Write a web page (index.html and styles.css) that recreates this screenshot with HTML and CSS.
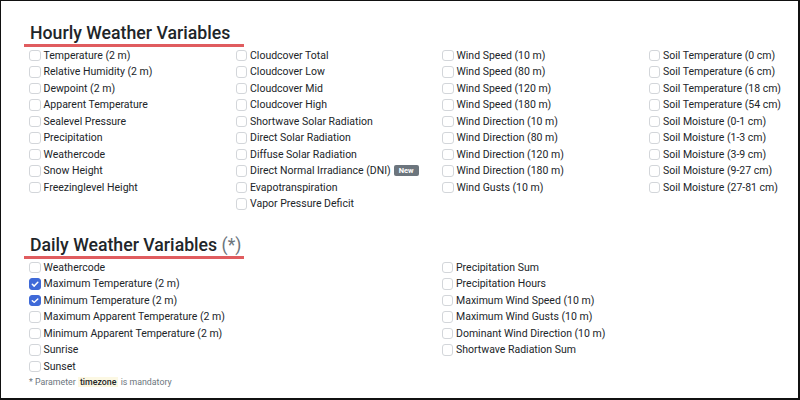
FILE: index.html
```html
<!DOCTYPE html>
<html lang="en">
<head>
  <meta charset="UTF-8">
  <title>Weather Variables</title>
  <link rel="stylesheet" href="styles.css">
</head>
<body>
  <div class="frame">

    <section class="group">
      <h2 class="title">Hourly Weather Variables</h2>
      <div class="grid four">
        <div class="col">
          <label class="check"><span class="box"></span>Temperature (2 m)</label>
          <label class="check"><span class="box"></span>Relative Humidity (2 m)</label>
          <label class="check"><span class="box"></span>Dewpoint (2 m)</label>
          <label class="check"><span class="box"></span>Apparent Temperature</label>
          <label class="check"><span class="box"></span>Sealevel Pressure</label>
          <label class="check"><span class="box"></span>Precipitation</label>
          <label class="check"><span class="box"></span>Weathercode</label>
          <label class="check"><span class="box"></span>Snow Height</label>
          <label class="check"><span class="box"></span>Freezinglevel Height</label>
        </div>
        <div class="col">
          <label class="check"><span class="box"></span>Cloudcover Total</label>
          <label class="check"><span class="box"></span>Cloudcover Low</label>
          <label class="check"><span class="box"></span>Cloudcover Mid</label>
          <label class="check"><span class="box"></span>Cloudcover High</label>
          <label class="check"><span class="box"></span>Shortwave Solar Radiation</label>
          <label class="check"><span class="box"></span>Direct Solar Radiation</label>
          <label class="check"><span class="box"></span>Diffuse Solar Radiation</label>
          <label class="check"><span class="box"></span>Direct Normal Irradiance (DNI)<span class="badge">New</span></label>
          <label class="check"><span class="box"></span>Evapotranspiration</label>
          <label class="check"><span class="box"></span>Vapor Pressure Deficit</label>
        </div>
        <div class="col">
          <label class="check"><span class="box"></span>Wind Speed (10 m)</label>
          <label class="check"><span class="box"></span>Wind Speed (80 m)</label>
          <label class="check"><span class="box"></span>Wind Speed (120 m)</label>
          <label class="check"><span class="box"></span>Wind Speed (180 m)</label>
          <label class="check"><span class="box"></span>Wind Direction (10 m)</label>
          <label class="check"><span class="box"></span>Wind Direction (80 m)</label>
          <label class="check"><span class="box"></span>Wind Direction (120 m)</label>
          <label class="check"><span class="box"></span>Wind Direction (180 m)</label>
          <label class="check"><span class="box"></span>Wind Gusts (10 m)</label>
        </div>
        <div class="col">
          <label class="check"><span class="box"></span>Soil Temperature (0 cm)</label>
          <label class="check"><span class="box"></span>Soil Temperature (6 cm)</label>
          <label class="check"><span class="box"></span>Soil Temperature (18 cm)</label>
          <label class="check"><span class="box"></span>Soil Temperature (54 cm)</label>
          <label class="check"><span class="box"></span>Soil Moisture (0-1 cm)</label>
          <label class="check"><span class="box"></span>Soil Moisture (1-3 cm)</label>
          <label class="check"><span class="box"></span>Soil Moisture (3-9 cm)</label>
          <label class="check"><span class="box"></span>Soil Moisture (9-27 cm)</label>
          <label class="check"><span class="box"></span>Soil Moisture (27-81 cm)</label>
        </div>
      </div>
    </section>

    <section class="group daily">
      <h2 class="title">Daily Weather Variables <span class="muted">(*)</span></h2>
      <div class="grid two">
        <div class="col">
          <label class="check"><span class="box"></span>Weathercode</label>
          <label class="check"><span class="box on"></span>Maximum Temperature (2 m)</label>
          <label class="check"><span class="box on"></span>Minimum Temperature (2 m)</label>
          <label class="check"><span class="box"></span>Maximum Apparent Temperature (2 m)</label>
          <label class="check"><span class="box"></span>Minimum Apparent Temperature (2 m)</label>
          <label class="check"><span class="box"></span>Sunrise</label>
          <label class="check"><span class="box"></span>Sunset</label>
          <p class="note">* Parameter <mark>timezone</mark> is mandatory</p>
        </div>
        <div class="col">
          <label class="check"><span class="box"></span>Precipitation Sum</label>
          <label class="check"><span class="box"></span>Precipitation Hours</label>
          <label class="check"><span class="box"></span>Maximum Wind Speed (10 m)</label>
          <label class="check"><span class="box"></span>Maximum Wind Gusts (10 m)</label>
          <label class="check"><span class="box"></span>Dominant Wind Direction (10 m)</label>
          <label class="check"><span class="box"></span>Shortwave Radiation Sum</label>
        </div>
      </div>
    </section>

  </div>
</body>
</html>
```

FILE: styles.css
```css
html, body {
  margin: 0;
  padding: 0;
}
body {
  font-family: 'Roboto', 'Liberation Sans', sans-serif;
  color: #212529;
  background: #fff;
}
.frame {
  box-sizing: border-box;
  width: 800px;
  height: 400px;
  border: solid #111;
  border-width: 1px 2px 2px 1px;
  padding: 21px 0 0 23px;
  overflow: hidden;
}
.title {
  box-sizing: border-box;
  width: 220px;
  margin: 0;
  padding-left: 6px;
  font-size: 17.7px;
  font-weight: 500;
  line-height: 22px;
  white-space: nowrap;
  border-bottom: 3px solid #e05c5f;
}
.title .muted {
  font-weight: 400;
  color: #6c757d;
}
.grid {
  display: grid;
  margin-left: 5px;
}
.grid.four { grid-template-columns: repeat(4, 206.5px); }
.grid.two { grid-template-columns: repeat(2, 412.5px); }
.daily {
  margin-top: 22px;
}
.col {
  display: flex;
  flex-direction: column;
}
.check {
  display: flex;
  align-items: center;
  height: 16.5px;
  font-size: 10.5px;
  white-space: nowrap;
}
.box {
  box-sizing: border-box;
  width: 11.5px;
  height: 11.5px;
  margin-right: 3px;
  border: 1px solid #d3d6da;
  border-radius: 3px;
  background: #fff;
  flex: none;
}
.box.on {
  border-color: #3f6ad8;
  background: #3f6ad8 url("data:image/svg+xml,%3Csvg xmlns='http://www.w3.org/2000/svg' viewBox='0 0 10 10'%3E%3Cpath d='M2.3 5.2l1.9 1.9 3.6-3.8' fill='none' stroke='%23fff' stroke-width='1.5' stroke-linecap='round' stroke-linejoin='round'/%3E%3C/svg%3E") center / 100% no-repeat;
}
.badge {
  margin-left: 3px;
  padding: 1px 5px;
  border-radius: 2px;
  background: #6c757d;
  color: #fff;
  font-size: 7.5px;
  font-weight: 700;
  line-height: 9px;
}
.note {
  margin: 0;
  font-size: 8.8px;
  line-height: 15px;
  color: #6c757d;
}
.note mark {
  padding: 0 2px;
  background: #fcf8e3;
  color: #212529;
  font-weight: 500;
}
```
